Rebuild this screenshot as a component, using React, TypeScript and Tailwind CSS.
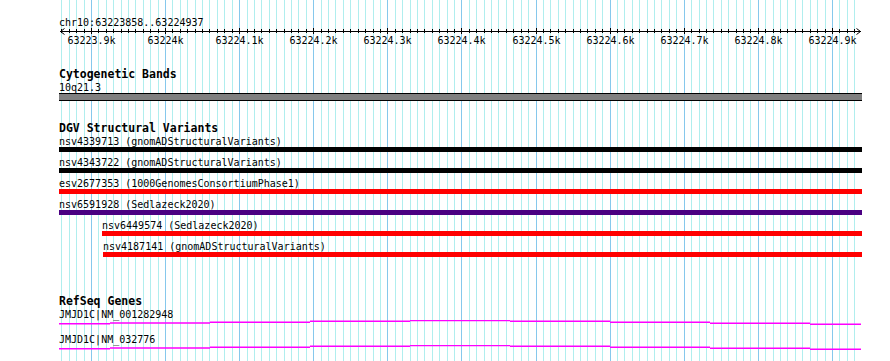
import React from "react";

const START = 63223858;
const END = 63224937;

// bp -> page x (the browser view is 800px wide, starting at x=60)
const toX = (bp: number) => 60.3 + (bp - START) * 0.741;

const TICKS: number[] = [];
for (let b = 63223860; b <= 63224930; b += 10) TICKS.push(b);

const MAJORS = TICKS.filter((b) => b % 100 === 0);

const label = (bp: number) => {
  const k = bp / 1000;
  return Number.isInteger(k) ? `${k}k` : `${k.toFixed(1)}k`;
};

type Variant = {
  id: string;
  source: string;
  color: string;
  left: string;
  width: string;
};

const VARIANTS: Variant[] = [
  { id: "nsv4339713", source: "gnomADStructuralVariants", color: "bg-black", left: "ml-[59px]", width: "w-[803px]" },
  { id: "nsv4343722", source: "gnomADStructuralVariants", color: "bg-black", left: "ml-[59px]", width: "w-[803px]" },
  { id: "esv2677353", source: "1000GenomesConsortiumPhase1", color: "bg-[#ff0000]", left: "ml-[59px]", width: "w-[803px]" },
  { id: "nsv6591928", source: "Sedlazeck2020", color: "bg-[#4b0082]", left: "ml-[59px]", width: "w-[803px]" },
  { id: "nsv6449574", source: "Sedlazeck2020", color: "bg-[#ff0000]", left: "ml-[102px]", width: "w-[760px]" },
  { id: "nsv4187141", source: "gnomADStructuralVariants", color: "bg-[#ff0000]", left: "ml-[103px]", width: "w-[759px]" }
];

// intron "hat" line, drawn as little steps like the canvas does
const HAT: [number, number, number][] = [
  [59, 110, 3.7],
  [110, 210, 3.0],
  [210, 310, 2.3],
  [310, 410, 1.3],
  [410, 510, 0.5],
  [510, 610, 1.3],
  [610, 710, 2.3],
  [710, 810, 3.3],
  [810, 861, 4.3]
];

function Grid() {
  return (
    <svg className="absolute inset-0" width={890} height={361}>
      {TICKS.map((b) => {
        const x = Math.floor(toX(b)) + 0.5;
        const major = b % 100 === 0;
        return (
          <line
            key={b}
            x1={x}
            x2={x}
            y1={0}
            y2={361}
            stroke={major ? "#86c8ec" : "#b0eeee"}
            strokeWidth={1}
          />
        );
      })}
    </svg>
  );
}

function Ruler() {
  return (
    <div className="flex flex-col">
      <svg className="block" width={890} height={7}>
        <line x1={60} x2={861} y1={3.5} y2={3.5} stroke="#000" strokeWidth={1} />
        <polyline points="64.5,0.5 60.5,3.5 64.5,6.5" fill="none" stroke="#000" strokeWidth={1} />
        <polyline points="856.5,0.5 860.5,3.5 856.5,6.5" fill="none" stroke="#000" strokeWidth={1} />
        {TICKS.map((b) => {
          const x = Math.floor(toX(b)) + 0.5;
          const major = b % 100 === 0;
          return (
            <line
              key={b}
              x1={x}
              x2={x}
              y1={major ? 0 : 1}
              y2={major ? 6 : 5}
              stroke="#000"
              strokeWidth={1}
            />
          );
        })}
      </svg>
      <div className="relative h-[11px] text-[10px] leading-[11px]">
        {MAJORS.map((b) => (
          <span
            key={b}
            className="absolute top-0 -translate-x-1/2 whitespace-nowrap"
            style={{ left: Math.floor(toX(b)) + 0.5 }}
          >
            {label(b)}
          </span>
        ))}
      </div>
    </div>
  );
}

function GeneLine() {
  const d = HAT.map(([a, b, y]) => `M${a - 59} ${y} H${b - 59}`).join(" ");
  return (
    <svg className="block ml-[59px]" width={803} height={6}>
      <path d={d} fill="none" stroke="#ff00ff" strokeWidth={1.4} />
    </svg>
  );
}

export default function App() {
  return (
    <div className="relative w-[890px] h-[361px] overflow-hidden bg-white text-black font-['DejaVu_Sans_Mono',monospace]">
      <Grid />
      <div className="relative flex flex-col pt-[17px]">
        <div className="pl-[59px] h-[11px] text-[10px] leading-[11px]">
          chr10:{START}..{END}
        </div>
        <Ruler />

        <div className="mt-[22px] pl-[59px] h-[13px] text-[11.5px] leading-[13px] font-bold">
          Cytogenetic Bands
        </div>
        <div className="mt-[1px] pl-[59px] h-[11px] text-[10px] leading-[11px]">10q21.3</div>
        <div className="ml-[59px] w-[803px] h-[8px] border-y border-black bg-[#808080]" />

        <div className="mt-[21px] pl-[59px] h-[13px] text-[11.5px] leading-[13px] font-bold">
          DGV Structural Variants
        </div>
        <div className="mt-[1px] flex flex-col gap-[5px]">
          {VARIANTS.map((v) => (
            <div key={v.id} className={`flex flex-col ${v.left} ${v.width}`}>
              <div className="h-[11px] text-[10px] leading-[11px] whitespace-nowrap">
                {v.id} ({v.source})
              </div>
              <div className={`h-[5px] ${v.color}`} />
            </div>
          ))}
        </div>

        <div className="mt-[38px] pl-[59px] h-[13px] text-[11.5px] leading-[13px] font-bold">
          RefSeq Genes
        </div>
        <div className="mt-[1px] pl-[59px] h-[11px] text-[10px] leading-[11px]">JMJD1C|NM_001282948</div>
        <GeneLine />
        <div className="mt-[8px] pl-[59px] h-[11px] text-[10px] leading-[11px]">JMJD1C|NM_032776</div>
        <GeneLine />
      </div>
    </div>
  );
}
